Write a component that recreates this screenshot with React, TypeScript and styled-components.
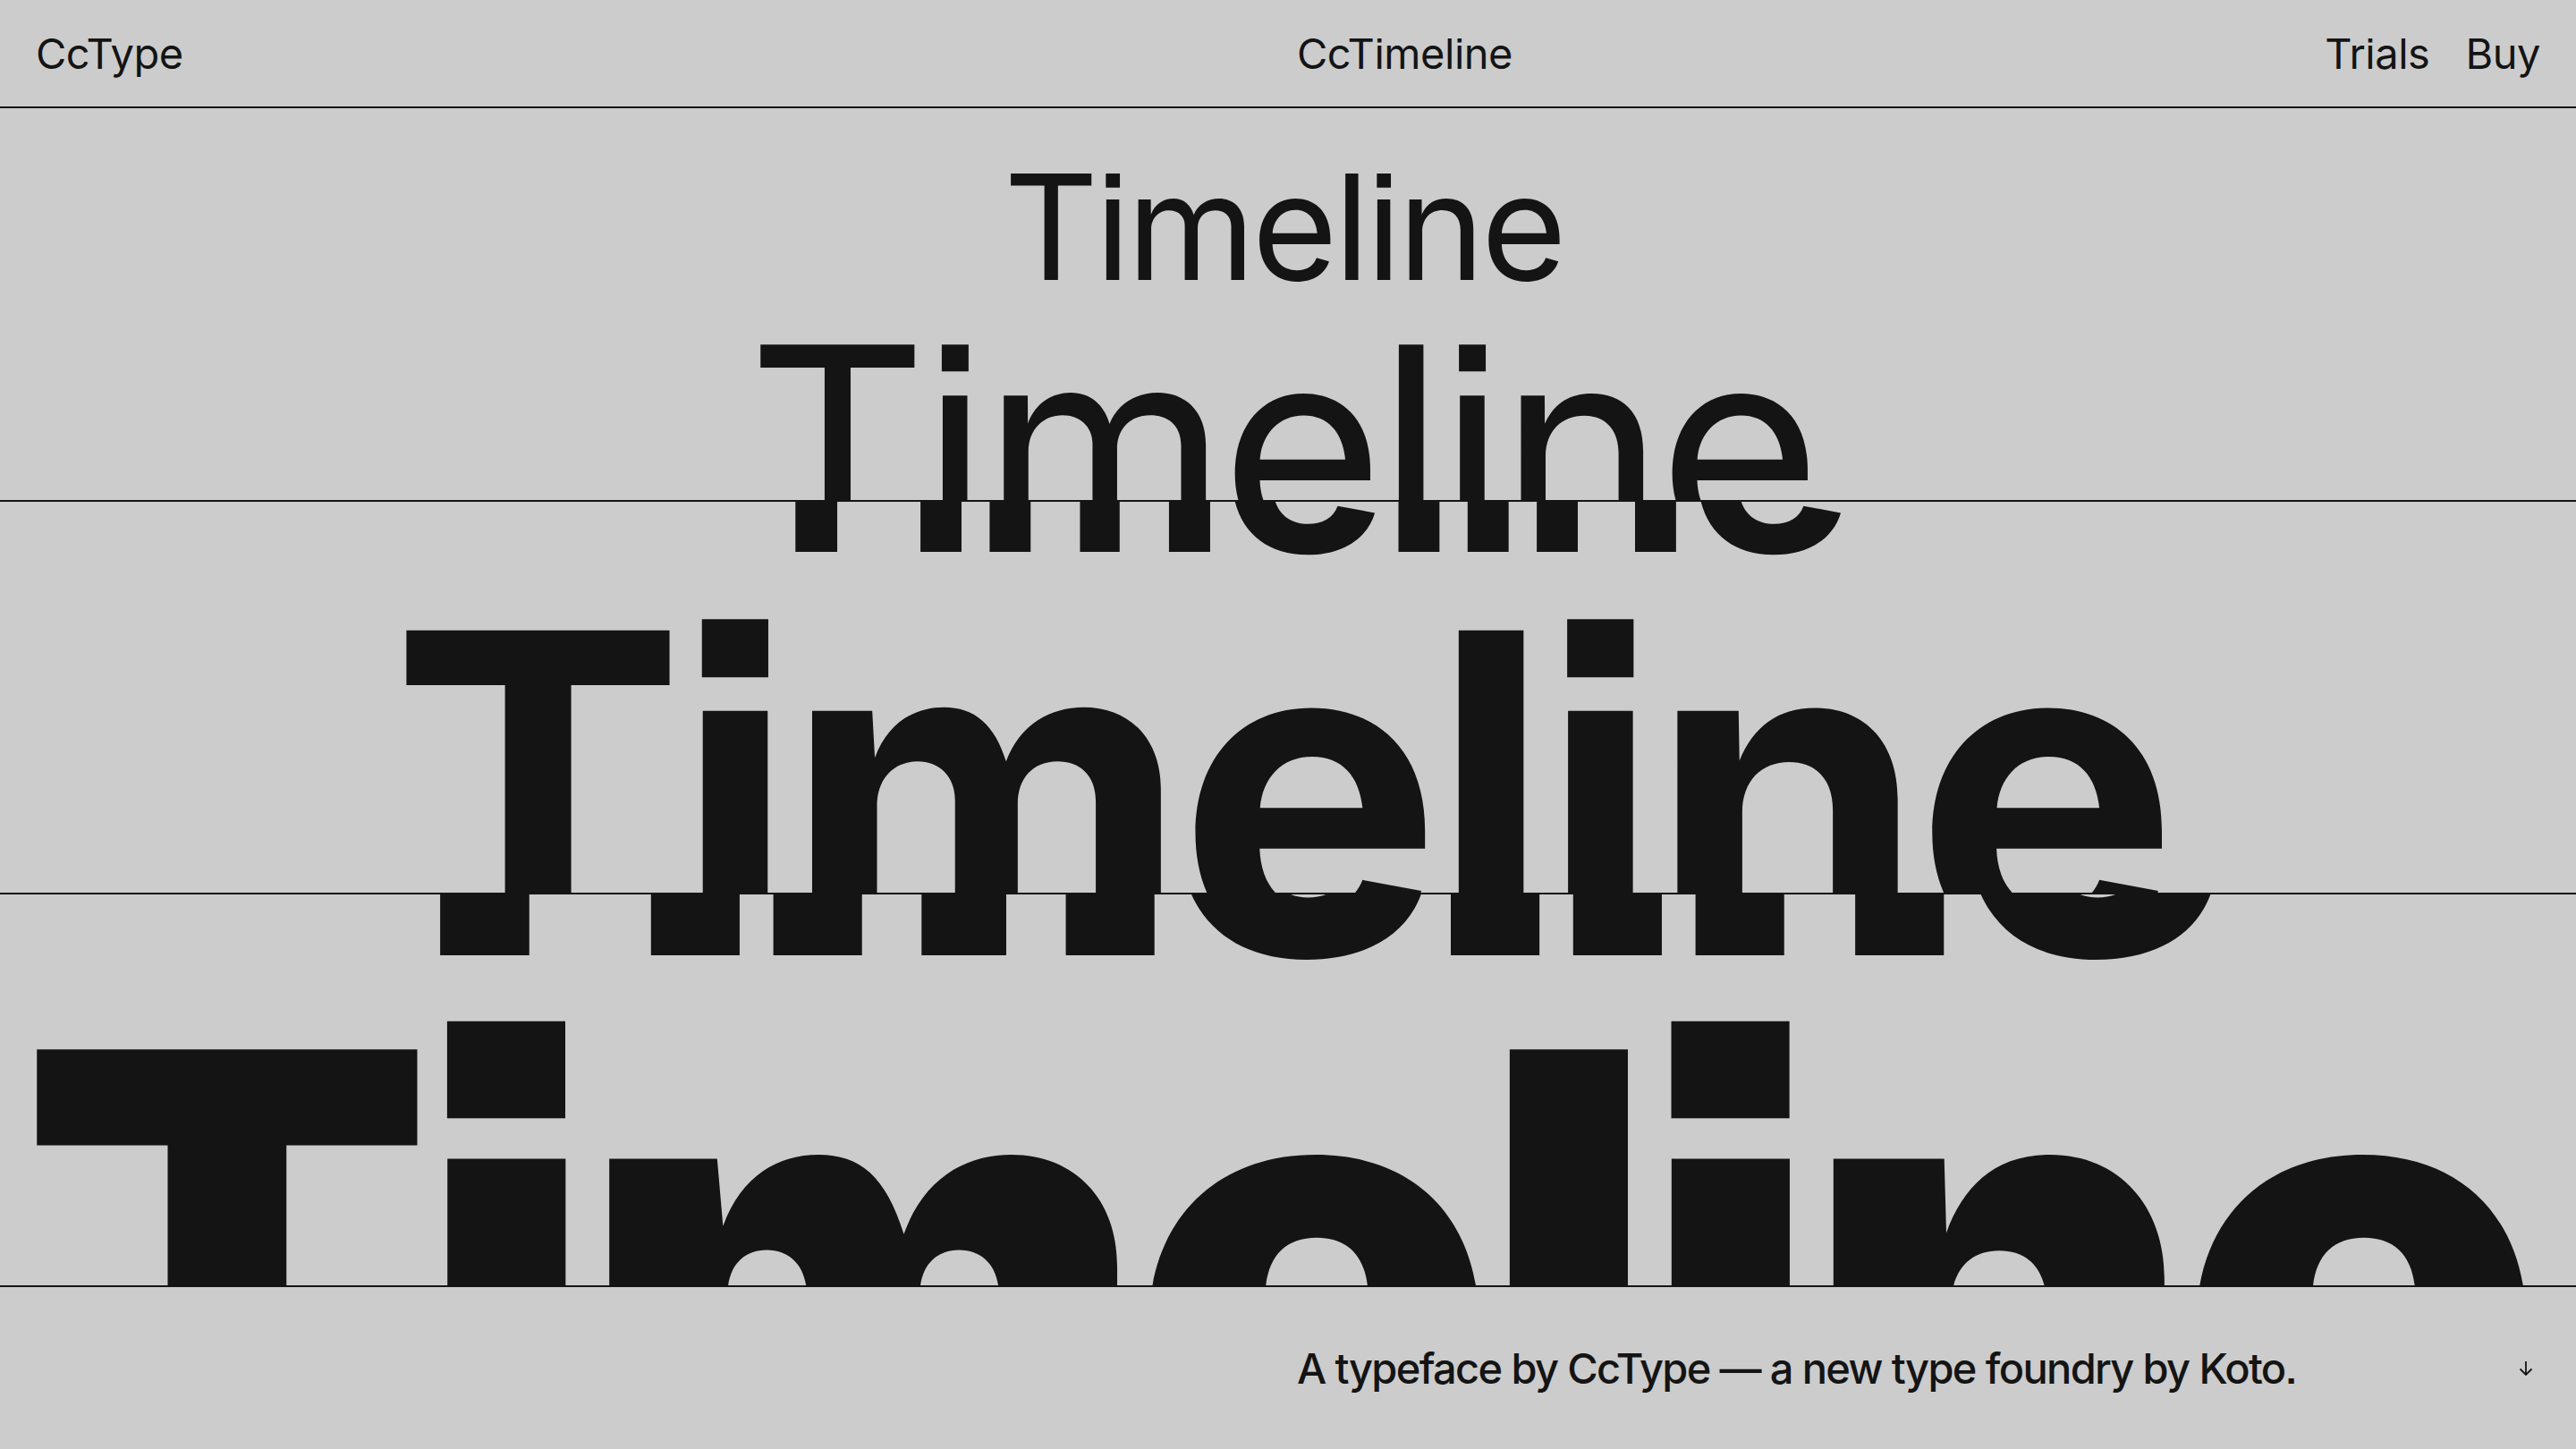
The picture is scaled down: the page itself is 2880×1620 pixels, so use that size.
import React from "react";
import styled, { createGlobalStyle } from "styled-components";

const GlobalStyle = createGlobalStyle`
  *, *::before, *::after { box-sizing: border-box; }
  html, body {
    margin: 0;
    padding: 0;
    background: #cccccc;
  }
  body {
    font-family: Inter, "Liberation Sans", Arial, sans-serif;
    font-feature-settings: "ss07";
    color: #141414;
    -webkit-font-smoothing: antialiased;
  }
`;

const Page = styled.div`
  height: 100vh;
  display: grid;
  grid-template-rows: 121px 440px 439px 439px 1fr;
  overflow: hidden;
`;

const Bar = styled.header`
  display: grid;
  grid-template-columns: 1fr 1fr;
  column-gap: 20px;
  align-items: center;
  padding: 0 40px;
  border-bottom: 2px solid #141414;
  font-size: 47px;
  letter-spacing: -0.01em;
  line-height: 1;
`;

const Half = styled.div`
  display: flex;
  justify-content: space-between;
  align-items: center;
`;

const Nav = styled.nav`
  display: flex;
  gap: 40px;
`;

const Band = styled.section`
  display: flex;
  flex-direction: column;
  align-items: center;
  overflow: hidden;
  border-bottom: 2px solid #141414;
`;

const Word = styled.div<{
  $size: number;
  $weight: number;
  $shift: number;
  $track: number;
  $nudge: number;
}>`
  flex: none;
  font-size: ${(p) => p.$size}px;
  font-weight: ${(p) => p.$weight};
  margin-top: ${(p) => p.$shift}px;
  margin-right: ${(p) => p.$nudge}px;
  letter-spacing: ${(p) => p.$track}em;
  line-height: 1;
  white-space: nowrap;
`;

const Foot = styled.footer`
  display: grid;
  grid-template-columns: 1fr 1fr;
  column-gap: 20px;
  align-items: center;
  padding: 0 40px;
`;

const Credit = styled.p`
  margin: 0;
  font-size: 47px;
  font-weight: 500;
  letter-spacing: -0.035em;
  line-height: 1;
`;

const Arrow = styled.svg`
  width: 16px;
  height: 16px;
  margin-right: 8px;
`;

// size / weight / margin / tracking / offset for each word, band by band
const bands = [
  [
    { size: 164, weight: 400, shift: 51, track: -0.024, nudge: 10 },
    { size: 313, weight: 400, shift: 7, track: -0.024, nudge: 16 },
  ],
  [
    { size: 313, weight: 700, shift: -214, track: -0.024, nudge: 7 },
    { size: 495, weight: 700, shift: -23, track: -0.024, nudge: 20 },
  ],
  [
    { size: 505, weight: 900, shift: -368, track: -0.025, nudge: 32 },
    { size: 673, weight: 900, shift: -55, track: -0.027, nudge: 32 },
  ],
];

export default function App() {
  return (
    <>
      <GlobalStyle />
      <Page>
        <Bar>
          <span>CcType</span>
          <Half>
            <span>CcTimeline</span>
            <Nav>
              <span>Trials</span>
              <span>Buy</span>
            </Nav>
          </Half>
        </Bar>

        {bands.map((words, i) => (
          <Band key={i}>
            {words.map((w, j) => (
              <Word
                key={j}
                $size={w.size}
                $weight={w.weight}
                $shift={w.shift}
                $track={w.track}
                $nudge={w.nudge}
              >
                Timeline
              </Word>
            ))}
          </Band>
        ))}

        <Foot>
          <span />
          <Half>
            <Credit>A typeface by CcType — a new type foundry by Koto.</Credit>
            <Arrow viewBox="0 0 16 16" fill="none">
              <path d="M8 0V15M1.5 8.5L8 15l6.5-6.5" stroke="#141414" strokeWidth="1.8" />
            </Arrow>
          </Half>
        </Foot>
      </Page>
    </>
  );
}
